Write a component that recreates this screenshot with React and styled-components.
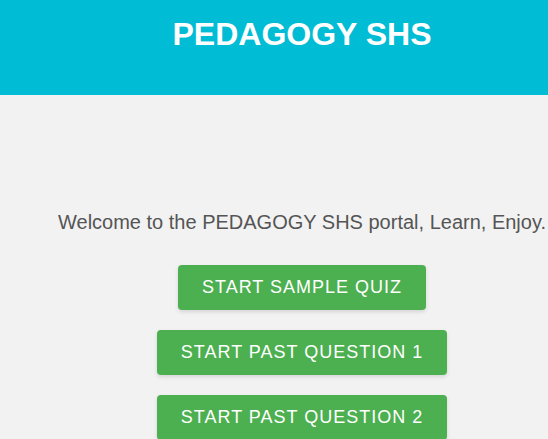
import React from "react";
import styled, { createGlobalStyle } from "styled-components";

const Global = createGlobalStyle`
  html, body {
    margin: 0;
    padding: 0;
    background: #f2f2f2;
    font-family: "Liberation Sans", Arial, sans-serif;
  }
`;

const Page = styled.div`
  width: 604px;
  text-align: center;
`;

const Header = styled.header`
  height: 95px;
  background: #00bcd4;
  box-sizing: border-box;
  padding-top: 14px;
`;

const Title = styled.h1`
  margin: 0;
  color: #fff;
  font-size: 32px;
  font-weight: bold;
  line-height: 40px;
`;

const Main = styled.main`
  padding-top: 115px;
  display: flex;
  flex-direction: column;
  align-items: center;
`;

const Welcome = styled.p`
  margin: 0 0 31px;
  color: #555;
  font-size: 20px;
  line-height: 24px;
  white-space: nowrap;
`;

const Buttons = styled.div`
  display: flex;
  flex-direction: column;
  align-items: center;
  gap: 20px;
`;

const Button = styled.button`
  height: 45px;
  padding: 0 24px;
  border: none;
  border-radius: 4px;
  background: #4caf50;
  color: #fff;
  font-family: inherit;
  font-size: 18px;
  letter-spacing: 1px;
  text-transform: uppercase;
  box-shadow: 0 2px 4px rgba(0, 0, 0, 0.12);
  cursor: pointer;
`;

export default function App() {
  return (
    <Page>
      <Global />
      <Header>
        <Title>PEDAGOGY SHS</Title>
      </Header>
      <Main>
        <Welcome>Welcome to the PEDAGOGY SHS portal, Learn, Enjoy.</Welcome>
        <Buttons>
          <Button>Start Sample Quiz</Button>
          <Button>Start Past Question 1</Button>
          <Button>Start Past Question 2</Button>
        </Buttons>
      </Main>
    </Page>
  );
}
